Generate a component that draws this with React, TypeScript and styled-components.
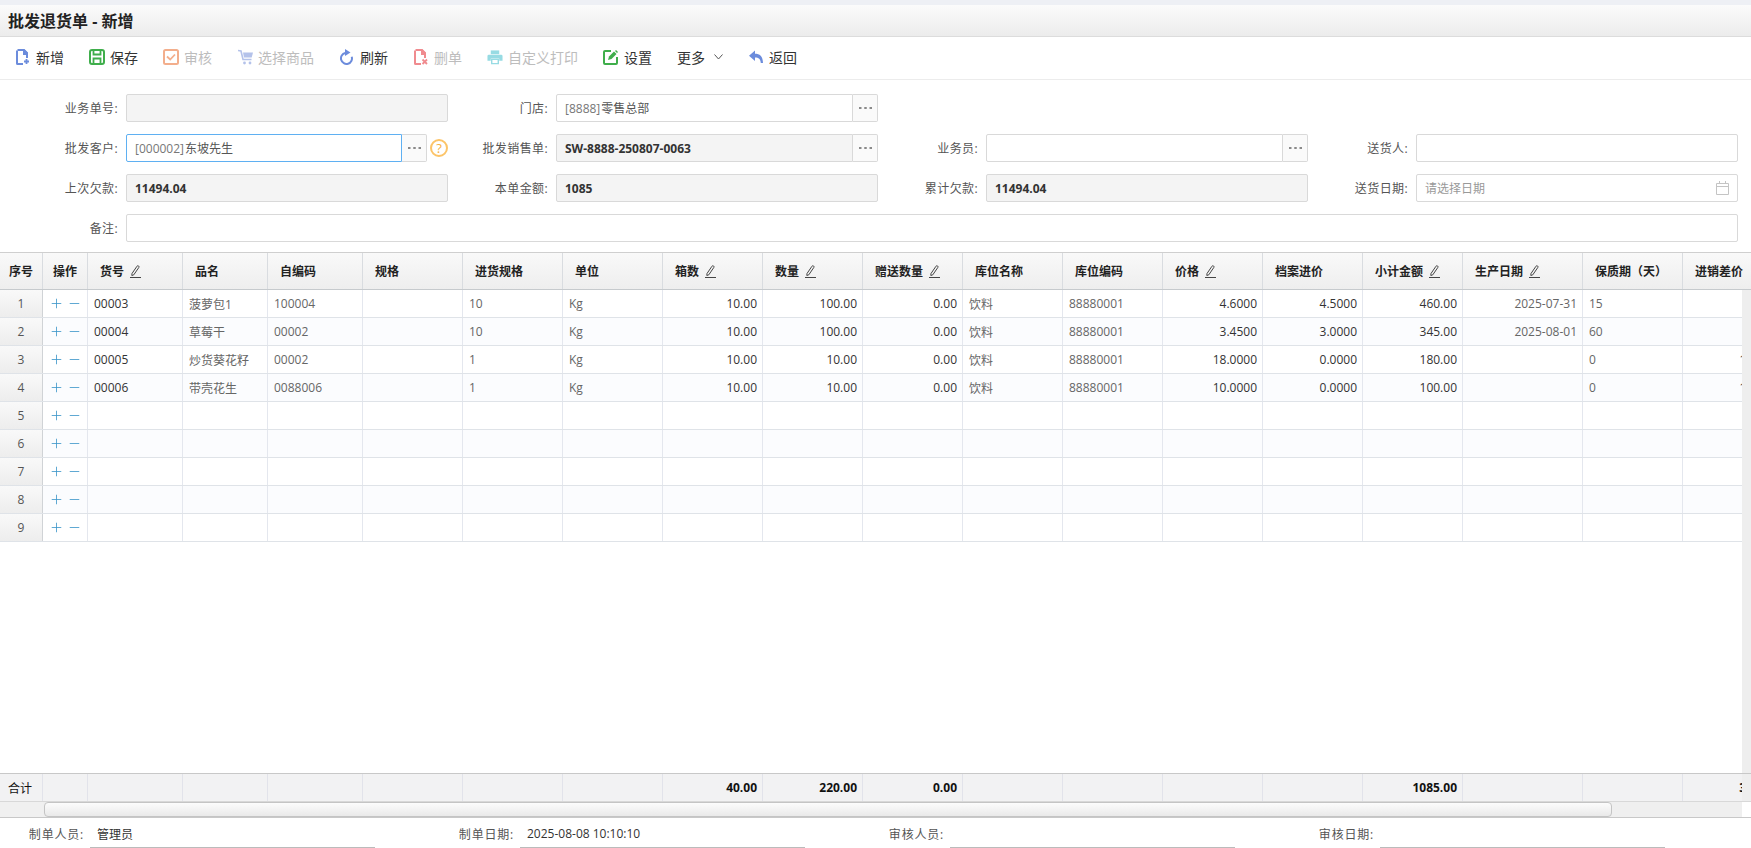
import { FC, ReactNode } from "react";
import styled, { createGlobalStyle } from "styled-components";
import { Plus, Minus } from "lucide-react";

const GlobalStyle = createGlobalStyle`
  html, body {
    margin: 0;
    padding: 0;
    height: 100%;
    overflow: hidden;
    background: #fff;
  }
  body {
    font-family: "Open Sans", "Noto Sans CJK SC", sans-serif;
    font-size: 12px;
    color: #333;
  }
`;

const Page = styled.div`
  width: 1751px;
  height: 848px;
  display: flex;
  flex-direction: column;
  overflow: hidden;
`;

const TitleBar = styled.div`
  flex: none;
  height: 30px;
  padding: 0 0 1px 8px;
  border-top: 5px solid #eef0f5;
  border-bottom: 1px solid #dcdcdc;
  background: linear-gradient(#fbfbfb, #ececec);
  display: flex;
  align-items: center;
  font-size: 16px;
  font-weight: 700;
  color: #222;
`;

const Toolbar = styled.div`
  flex: none;
  height: 40px;
  border-bottom: 1px solid #ececec;
  padding: 0 0 2px 15px;
  display: flex;
  align-items: center;
  gap: 25px;
`;

const ToolItem = styled.div<{ $off?: boolean }>`
  display: flex;
  align-items: center;
  gap: 5px;
  font-size: 14px;
  color: ${(p) => (p.$off ? "#bdbdbd" : "#333")};
`;

const ToolIcon = styled.span`
  flex: none;
  width: 16px;
  display: flex;
  justify-content: center;
`;

const Chevron = styled.span`
  margin-left: 4px;
  display: flex;
`;

const Form = styled.div`
  flex: none;
  padding: 14px 0 10px 18px;
  display: grid;
  grid-template-columns: repeat(4, 430px);
  grid-auto-rows: 28px;
  row-gap: 12px;
`;

const Field = styled.div<{ $wide?: boolean }>`
  display: flex;
  align-items: stretch;
  ${(p) => (p.$wide ? "grid-column: 1 / -1;" : "")}
`;

const Label = styled.div`
  flex: none;
  width: 108px;
  box-sizing: border-box;
  padding-right: 8px;
  display: flex;
  align-items: center;
  justify-content: flex-end;
  letter-spacing: 0.4px;
  color: #555;
`;

const Box = styled.div<{ $locked?: boolean; $focus?: boolean; $bold?: boolean; $joined?: boolean }>`
  flex: 1;
  min-width: 0;
  box-sizing: border-box;
  padding: 0 8px;
  display: flex;
  align-items: center;
  justify-content: space-between;
  border: 1px solid ${(p) => (p.$focus ? "#5fb0f2" : "#d9d9d9")};
  border-radius: ${(p) => (p.$joined ? "2px 0 0 2px" : "2px")};
  background: ${(p) => (p.$locked ? "#f4f4f4" : "#fff")};
  font-weight: ${(p) => (p.$bold ? 700 : 400)};
  color: ${(p) => (p.$bold ? "#333" : "#555")};
`;

const Code = styled.span`
  color: #777;
  margin-right: 1px;
`;

const Hint = styled.span`
  color: #999;
`;

const LookupBtn = styled.div`
  flex: none;
  width: 25px;
  box-sizing: border-box;
  border: 1px solid #d9d9d9;
  border-left: none;
  border-radius: 0 2px 2px 0;
  background: #fafafa;
  display: flex;
  align-items: center;
  justify-content: center;
`;

const Help = styled.div`
  flex: none;
  align-self: center;
  width: 18px;
  height: 18px;
  margin-left: 3px;
  box-sizing: border-box;
  border: 2px solid #fcc468;
  border-radius: 50%;
  color: #f5b041;
  font-size: 13px;
  line-height: 14px;
  text-align: center;
`;

const Row = styled.div<{ $alt?: boolean }>`
  display: flex;
  height: 28px;
  box-sizing: border-box;
  border-bottom: 1px solid #dfe3e8;
  background: ${(p) => (p.$alt ? "#fbfcfe" : "#fff")};
`;

const HeadRow = styled.div`
  flex: none;
  display: flex;
  height: 38px;
  box-sizing: border-box;
  border-top: 1px solid #cfcfcf;
  border-bottom: 1px solid #c6cacd;
  background: linear-gradient(#f9f9f9, #eeeeee);
  overflow: hidden;
`;

const HeadCell = styled.div<{ $w: number; $center?: boolean }>`
  flex: none;
  width: ${(p) => p.$w}px;
  box-sizing: border-box;
  border-right: 1px solid #d9dce0;
  padding-left: ${(p) => (p.$center ? 0 : 12)}px;
  display: flex;
  align-items: center;
  justify-content: ${(p) => (p.$center ? "center" : "flex-start")};
  gap: 6px;
  font-weight: 700;
  color: #222;
  white-space: nowrap;
`;

const Cell = styled.div<{ $w: number; $right?: boolean; $soft?: boolean }>`
  flex: none;
  width: ${(p) => p.$w}px;
  box-sizing: border-box;
  border-right: 1px solid #e4e7ee;
  padding: 0 5px 0 6px;
  display: flex;
  align-items: center;
  justify-content: ${(p) => (p.$right ? "flex-end" : "flex-start")};
  color: ${(p) => (p.$soft ? "#666" : "#333")};
  white-space: nowrap;
`;

const IndexCell = styled.div`
  flex: none;
  width: 43px;
  box-sizing: border-box;
  border-right: 1px solid #d0d3d6;
  background: linear-gradient(#f9f9f9, #ededed);
  display: flex;
  align-items: center;
  justify-content: center;
  color: #555;
`;

const OpCell = styled.div`
  flex: none;
  width: 45px;
  box-sizing: border-box;
  border-right: 1px solid #e4e7ee;
  padding-left: 6px;
  display: flex;
  align-items: center;
  gap: 3px;
  color: #3b95c9;
`;

const BodyWrap = styled.div`
  flex: 1;
  min-height: 0;
  display: flex;
`;

const Clip = styled.div`
  flex: 1;
  min-width: 0;
  overflow: hidden;
`;

const VTrack = styled.div`
  flex: none;
  width: 9px;
  background: #eeeeee;
`;

const TotalRow = styled.div`
  flex: none;
  display: flex;
  height: 29px;
  box-sizing: border-box;
  border-top: 1px solid #c8c8c8;
  border-bottom: 1px solid #d8d8d8;
`;

const TotalCells = styled.div`
  flex: 1;
  min-width: 0;
  display: flex;
  overflow: hidden;
  background: #f2f2f3;
`;

const TotalCell = styled.div<{ $w: number; $first?: boolean }>`
  flex: none;
  width: ${(p) => p.$w}px;
  box-sizing: border-box;
  border-right: 1px solid #e2e3ea;
  padding: 0 5px 0 ${(p) => (p.$first ? 8 : 6)}px;
  display: flex;
  align-items: center;
  justify-content: ${(p) => (p.$first ? "flex-start" : "flex-end")};
  font-weight: ${(p) => (p.$first ? 400 : 700)};
  color: #111;
`;

const HScroll = styled.div`
  flex: none;
  height: 15px;
  border-bottom: 1px solid #c8c8c8;
  display: flex;
`;

const ScrollCorner = styled.div`
  flex: none;
  width: 43px;
  background: #f0f0f0;
`;

const ScrollTrack = styled.div`
  flex: none;
  width: 1699px;
  background: #efefef;
`;

const ScrollThumb = styled.div`
  width: 1568px;
  height: 15px;
  margin-left: 1px;
  box-sizing: border-box;
  border: 1px solid #c4c4c4;
  border-radius: 4px;
  background: linear-gradient(#fcfcfc, #e9e9e9);
`;

const Audit = styled.div`
  flex: none;
  height: 30px;
  display: grid;
  grid-template-columns: repeat(4, 430px);
`;

const AuditField = styled.div`
  display: flex;
`;

const AuditLabel = styled.div`
  flex: none;
  width: 90px;
  box-sizing: border-box;
  padding: 7px 6px 0 0;
  text-align: right;
  letter-spacing: 0.8px;
  color: #555;
`;

const AuditValue = styled.div`
  flex: none;
  width: 285px;
  box-sizing: border-box;
  border-bottom: 1px solid #bbb;
  padding: 7px 0 0 7px;
  color: #333;
`;

const C = {
  blue: "#6c8cdc",
  green: "#3fae4b",
  orange: "#f3ae8c",
  cart: "#b4c2ea",
  red: "#f08b8f",
  cyan: "#97dbe3",
};

const DocIcon: FC<{ color: string; mark: "plus" | "x" }> = ({ color, mark }) => (
  <svg width="14" height="16" viewBox="0 0 14 16">
    <path d="M1.5 1h6.5l3 3v5M7 15H1.500a.5.5 0 0 1-.5-.5V1.500" fill="none" stroke={color} strokeWidth="2" />
    <path d="M7 .5h1.500l3.500 3.500V6H7z" fill={color} />
    {mark === "plus" ? (
      <path d="M10.500 10v5M8 12.500h5" stroke={color} strokeWidth="1.800" />
    ) : (
      <path d="M8.500 10.500l4.500 4.500M13 10.500l-4.500 4.500" stroke={color} strokeWidth="1.800" />
    )}
  </svg>
);

const SaveIcon = () => (
  <svg width="16" height="16" viewBox="0 0 16 16">
    <rect x="1" y="1" width="14" height="14" rx="2" fill="none" stroke={C.green} strokeWidth="2" />
    <path d="M4.500 1.500v4h7v-4M4.500 15v-5.500h7V15" fill="none" stroke={C.green} strokeWidth="1.800" />
  </svg>
);

const AuditIcon = () => (
  <svg width="16" height="16" viewBox="0 0 16 16">
    <rect x="1" y="1" width="14" height="14" rx="1.500" fill="none" stroke={C.orange} strokeWidth="2" />
    <path d="M4 7.500l3.200 3L12 5.500" fill="none" stroke={C.orange} strokeWidth="1.800" />
  </svg>
);

const CartIcon = () => (
  <svg width="15" height="16" viewBox="0 0 15 16">
    <path d="M0 1.500l3 .5 2 8.500h8.500" fill="none" stroke={C.cart} strokeWidth="1.600" />
    <path d="M5 3.500h10l-1.300 5H6z" fill={C.cart} />
    <circle cx="6.500" cy="14" r="1.400" fill={C.cart} />
    <circle cx="12" cy="14" r="1.400" fill={C.cart} />
  </svg>
);

const RefreshIcon = () => (
  <svg width="14" height="16" viewBox="0 0 14 16">
    <path d="M10.800 6.200A5.500 5.500 0 1 1 3.500 5" fill="none" stroke={C.blue} strokeWidth="2" transform="rotate(20 7 9.500)" />
    <path d="M5 0l5.500 3.500L5 7z" fill={C.blue} />
  </svg>
);

const PrintIcon = () => (
  <svg width="17" height="16" viewBox="0 0 17 16">
    <path d="M4 1h9v4H4z" fill={C.cyan} />
    <path d="M2 5.500h13a1.500 1.500 0 0 1 1.500 1.500v5H13v-2.500H4V12H.5V7A1.500 1.500 0 0 1 2 5.500z" fill={C.cyan} />
    <path d="M5 10.500h7V15H5z" fill="none" stroke={C.cyan} strokeWidth="1.500" />
  </svg>
);

const EditBoxIcon = () => (
  <svg width="16" height="16" viewBox="0 0 16 16">
    <path d="M8 2H2a1 1 0 0 0-1 1v11a1 1 0 0 0 1 1h11a1 1 0 0 0 1-1V8" fill="none" stroke={C.green} strokeWidth="2" />
    <path d="M5 11l1-3.500 5-5 2.500 2.500-5 5z" fill={C.green} />
    <path d="M13 1l2 2-1 1-2-2z" fill={C.green} />
  </svg>
);

const BackIcon = () => (
  <svg width="14" height="14" viewBox="0 0 14 14">
    <path d="M6 .5v3.200c4.500 0 8 2.300 8 9.300h-2.200c-.3-3.900-2-5.400-5.800-5.400V11L0 5.700z" fill={C.blue} />
  </svg>
);

const ChevronIcon = () => (
  <svg width="9" height="6" viewBox="0 0 9 6">
    <path d="M.5.500l4 4.500 4-4.500" fill="none" stroke="#555" strokeWidth="1" />
  </svg>
);

const DotsIcon = () => (
  <svg width="13" height="2" viewBox="0 0 13 2">
    <rect x="0" y="0" width="2.500" height="2" fill="#8a8a8a" />
    <rect x="5.250" y="0" width="2.500" height="2" fill="#8a8a8a" />
    <rect x="10.500" y="0" width="2.500" height="2" fill="#8a8a8a" />
  </svg>
);

const CalendarIcon = () => (
  <svg width="13" height="14" viewBox="0 0 13 14">
    <path d="M.5 2.500h12v11H.5zM.5 5.500h12M3.500 0v3M9.500 0v3" fill="none" stroke="#c4c4c4" strokeWidth="1" />
  </svg>
);

const PenIcon = () => (
  <svg width="11" height="13" viewBox="0 0 11 13">
    <path d="M2 8.500L7 1.200c.5-.6 1.100-.6 1.600-.2s.6 1 .2 1.500L3.800 9.800 1.800 10.500z" fill="none" stroke="#444" strokeWidth="1" />
    <path d="M0 12.500h11" stroke="#444" strokeWidth="1" />
  </svg>
);

type Column = { title: string; w: number; edit?: boolean; right?: boolean; soft?: boolean };

const columns: Column[] = [
  { title: "货号", w: 95, edit: true },
  { title: "品名", w: 85, soft: true },
  { title: "自编码", w: 95, soft: true },
  { title: "规格", w: 100 },
  { title: "进货规格", w: 100, soft: true },
  { title: "单位", w: 100, soft: true },
  { title: "箱数", w: 100, edit: true, right: true },
  { title: "数量", w: 100, edit: true, right: true },
  { title: "赠送数量", w: 100, edit: true, right: true },
  { title: "库位名称", w: 100, soft: true },
  { title: "库位编码", w: 100, soft: true },
  { title: "价格", w: 100, edit: true, right: true },
  { title: "档案进价", w: 100, right: true },
  { title: "小计金额", w: 100, edit: true, right: true },
  { title: "生产日期", w: 120, edit: true, right: true, soft: true },
  { title: "保质期（天）", w: 100, soft: true },
  { title: "进销差价", w: 100, right: true },
];

const rows: string[][] = [
  ["00003", "菠萝包1", "100004", "", "10", "Kg", "10.00", "100.00", "0.00", "饮料", "88880001", "4.6000", "4.5000", "460.00", "2025-07-31", "15", "10.00"],
  ["00004", "草莓干", "00002", "", "10", "Kg", "10.00", "100.00", "0.00", "饮料", "88880001", "3.4500", "3.0000", "345.00", "2025-08-01", "60", "45.00"],
  ["00005", "炒货葵花籽", "00002", "", "1", "Kg", "10.00", "10.00", "0.00", "饮料", "88880001", "18.0000", "0.0000", "180.00", "", "0", "180.00"],
  ["00006", "带壳花生", "0088006", "", "1", "Kg", "10.00", "10.00", "0.00", "饮料", "88880001", "10.0000", "0.0000", "100.00", "", "0", "100.00"],
];

const totals: Record<string, string> = {
  箱数: "40.00",
  数量: "220.00",
  赠送数量: "0.00",
  小计金额: "1085.00",
  进销差价: "335.00",
};

const Lookup: FC<{ children: ReactNode; locked?: boolean; bold?: boolean; focus?: boolean }> = ({ children, locked, bold, focus }) => (
  <>
    <Box $joined $locked={locked} $bold={bold} $focus={focus}>
      <span>{children}</span>
    </Box>
    <LookupBtn>
      <DotsIcon />
    </LookupBtn>
  </>
);

export default function App() {
  return (
    <Page>
      <GlobalStyle />
      <TitleBar>批发退货单 - 新增</TitleBar>

      <Toolbar>
        <ToolItem><ToolIcon><DocIcon color={C.blue} mark="plus" /></ToolIcon>新增</ToolItem>
        <ToolItem><ToolIcon><SaveIcon /></ToolIcon>保存</ToolItem>
        <ToolItem $off><ToolIcon><AuditIcon /></ToolIcon>审核</ToolItem>
        <ToolItem $off><ToolIcon><CartIcon /></ToolIcon>选择商品</ToolItem>
        <ToolItem><ToolIcon><RefreshIcon /></ToolIcon>刷新</ToolItem>
        <ToolItem $off><ToolIcon><DocIcon color={C.red} mark="x" /></ToolIcon>删单</ToolItem>
        <ToolItem $off><ToolIcon><PrintIcon /></ToolIcon>自定义打印</ToolItem>
        <ToolItem><ToolIcon><EditBoxIcon /></ToolIcon>设置</ToolItem>
        <ToolItem>更多<Chevron><ChevronIcon /></Chevron></ToolItem>
        <ToolItem><ToolIcon><BackIcon /></ToolIcon>返回</ToolItem>
      </Toolbar>

      <Form>
        <Field>
          <Label>业务单号:</Label>
          <Box $locked />
        </Field>
        <Field>
          <Label>门店:</Label>
          <Lookup><Code>[8888]</Code>零售总部</Lookup>
        </Field>
        <div />
        <div />

        <Field>
          <Label>批发客户:</Label>
          <Lookup focus><Code>[000002]</Code>东坡先生</Lookup>
          <Help>?</Help>
        </Field>
        <Field>
          <Label>批发销售单:</Label>
          <Lookup locked bold>SW-8888-250807-0063</Lookup>
        </Field>
        <Field>
          <Label>业务员:</Label>
          <Lookup>{""}</Lookup>
        </Field>
        <Field>
          <Label>送货人:</Label>
          <Box />
        </Field>

        <Field>
          <Label>上次欠款:</Label>
          <Box $locked $bold>11494.04</Box>
        </Field>
        <Field>
          <Label>本单金额:</Label>
          <Box $locked $bold>1085</Box>
        </Field>
        <Field>
          <Label>累计欠款:</Label>
          <Box $locked $bold>11494.04</Box>
        </Field>
        <Field>
          <Label>送货日期:</Label>
          <Box>
            <Hint>请选择日期</Hint>
            <CalendarIcon />
          </Box>
        </Field>

        <Field $wide>
          <Label>备注:</Label>
          <Box />
        </Field>
      </Form>

      <HeadRow>
        <HeadCell $w={43} $center>序号</HeadCell>
        <HeadCell $w={45} $center>操作</HeadCell>
        {columns.map((c) => (
          <HeadCell key={c.title} $w={c.w}>
            {c.title}
            {c.edit && <PenIcon />}
          </HeadCell>
        ))}
      </HeadRow>

      <BodyWrap>
        <Clip>
          {Array.from({ length: 9 }, (_, i) => (
            <Row key={i} $alt={i % 2 === 1}>
              <IndexCell>{i + 1}</IndexCell>
              <OpCell>
                <Plus size={15} strokeWidth={1.3} />
                <Minus size={15} strokeWidth={1.3} />
              </OpCell>
              {columns.map((c, j) => (
                <Cell key={c.title} $w={c.w} $right={c.right} $soft={c.soft}>
                  {rows[i]?.[j]}
                </Cell>
              ))}
            </Row>
          ))}
        </Clip>
        <VTrack />
      </BodyWrap>

      <TotalRow>
        <TotalCells>
          <TotalCell $w={43} $first>合计</TotalCell>
          <TotalCell $w={45} />
          {columns.map((c) => (
            <TotalCell key={c.title} $w={c.w}>{totals[c.title]}</TotalCell>
          ))}
        </TotalCells>
        <VTrack />
      </TotalRow>

      <HScroll>
        <ScrollCorner />
        <ScrollTrack>
          <ScrollThumb />
        </ScrollTrack>
      </HScroll>

      <Audit>
        <AuditField>
          <AuditLabel>制单人员:</AuditLabel>
          <AuditValue>管理员</AuditValue>
        </AuditField>
        <AuditField>
          <AuditLabel>制单日期:</AuditLabel>
          <AuditValue>2025-08-08 10:10:10</AuditValue>
        </AuditField>
        <AuditField>
          <AuditLabel>审核人员:</AuditLabel>
          <AuditValue />
        </AuditField>
        <AuditField>
          <AuditLabel>审核日期:</AuditLabel>
          <AuditValue />
        </AuditField>
      </Audit>
    </Page>
  );
}
